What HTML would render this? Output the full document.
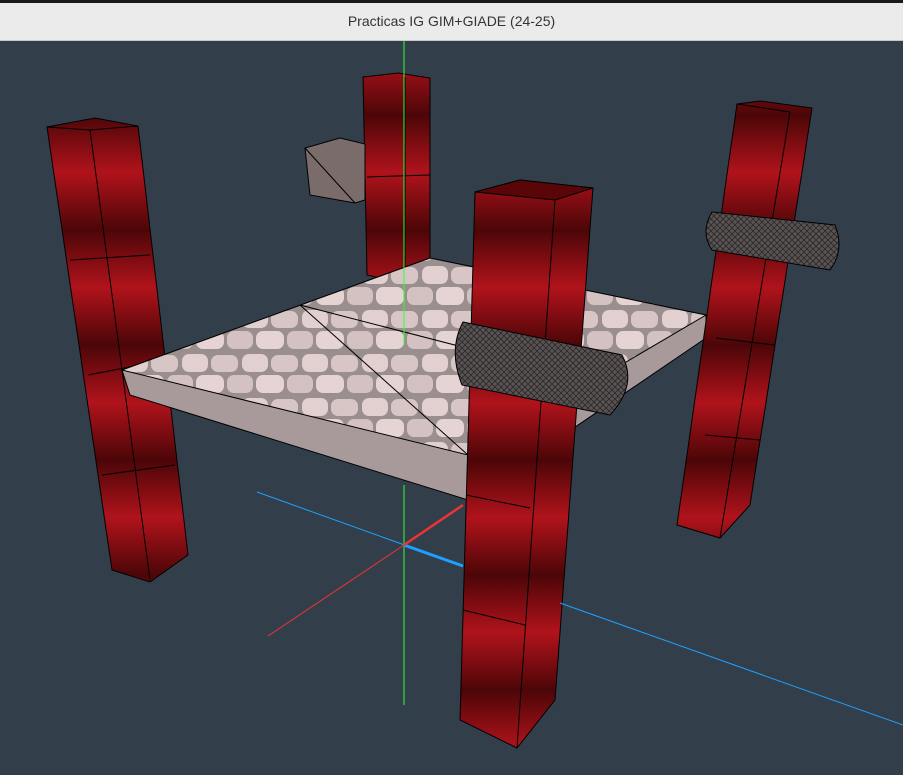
<!DOCTYPE html>
<html><head><meta charset="utf-8"><style>
body{margin:0;width:903px;height:775px;overflow:hidden;background:#323f4b;font-family:"Liberation Sans",sans-serif}
#top{position:absolute;left:0;top:0;width:903px;height:3px;background:#1a1a1a}
#bar{position:absolute;left:0;top:3px;width:903px;height:37px;background:#ebebeb;border-bottom:1px solid #c8c8c8;text-align:center;line-height:36px;font-size:14px;color:#333}
svg{position:absolute;left:0;top:41px}
</style></head><body>
<div id="top"></div><div id="bar">Practicas IG GIM+GIADE (24-25)</div>
<svg width="903" height="734" viewBox="0 41 903 734">
<defs>
<linearGradient id="r" x1="0" y1="0" x2="0" y2="1" spreadMethod="repeat">
<stop offset="0" stop-color="#4c0608"/><stop offset="0.5" stop-color="#b0131b"/><stop offset="1" stop-color="#4c0608"/>
</linearGradient>
<pattern id="rp" width="10" height="115" patternUnits="userSpaceOnUse"><rect width="10" height="115" fill="url(#r)"/></pattern>
<pattern id="st" width="60" height="44" patternUnits="userSpaceOnUse">
<rect width="60" height="44" fill="#9a8e8e"/>
<rect x="2" y="2" width="26" height="18" rx="7" fill="#e2d0d0"/>
<rect x="31" y="3" width="27" height="17" rx="7" fill="#d8c6c6"/>
<rect x="16" y="23" width="28" height="18" rx="7" fill="#e6d4d4"/>
<rect x="-11" y="23" width="24" height="18" rx="7" fill="#d4c2c2"/>
<rect x="47" y="23" width="24" height="18" rx="7" fill="#d4c2c2"/>
</pattern>
<pattern id="mesh" width="6" height="6" patternUnits="userSpaceOnUse"><rect width="6" height="6" fill="#5a5252"/><path d="M0 0L6 6M6 0L0 6" stroke="#222" stroke-width="0.7"/></pattern>
</defs>
<g stroke="#000" stroke-width="1">
<polygon points="363,77 398,73 430,78 430,265 398,282 367,275" fill="url(#rp)"/>
<line x1="405" y1="77" x2="405" y2="280"/>
<line x1="367" y1="177" x2="430" y2="175"/>
<polygon points="305,148 340,138 365,144 365,200 355,203 310,195" fill="#7a6c6a"/>
<line x1="305" y1="148" x2="355" y2="203"/>
<polygon points="47,127 95,118 138,126 188,555 150,582 112,570" fill="url(#rp)"/>
<line x1="90" y1="130" x2="150" y2="580"/><line x1="47" y1="127" x2="90" y2="130"/><line x1="90" y1="130" x2="138" y2="126"/>
<line x1="70" y1="260" x2="150" y2="255"/><line x1="88" y1="375" x2="165" y2="360"/><line x1="102" y1="475" x2="175" y2="465"/>
<polygon points="122,370 430,258 706,315 706,338 468,500 130,395" fill="#a89a9a"/>
<polygon points="122,370 430,258 706,315 468,455" fill="url(#st)"/>
<line x1="300" y1="305" x2="590" y2="380"/>
<line x1="300" y1="305" x2="468" y2="455"/>
<polygon points="737,104 760,101 812,108 750,505 720,538 677,525" fill="url(#rp)"/>
<line x1="737" y1="104" x2="790" y2="112"/><line x1="790" y1="112" x2="720" y2="538"/>
<line x1="716" y1="338" x2="775" y2="345"/><line x1="705" y1="435" x2="760" y2="440"/>
<path d="M712 212 L835 225 Q845 250 830 270 L712 250 Q700 232 712 212Z" fill="url(#mesh)"/>
<polygon points="475,192 520,180 593,188 555,700 517,748 460,720" fill="url(#rp)"/>
<polygon points="475,192 520,180 593,188 555,200" fill="#5a0608"/>
<line x1="555" y1="200" x2="517" y2="748"/>
<line x1="466" y1="495" x2="530" y2="508"/><line x1="463" y1="610" x2="525" y2="625"/>
<path d="M463 322 L622 355 Q638 385 610 415 L462 385 Q448 350 463 322Z" fill="url(#mesh)"/>
</g>
<line x1="404" y1="41" x2="404" y2="345" stroke="#3f3" stroke-width="1"/>
<line x1="404" y1="485" x2="404" y2="705" stroke="#3f3" stroke-width="1"/>
<line x1="257" y1="492" x2="463" y2="566" stroke="#1ea0ff" stroke-width="1"/>
<line x1="404" y1="545" x2="463" y2="566" stroke="#1ea0ff" stroke-width="3"/>
<line x1="560" y1="603" x2="903" y2="725" stroke="#1ea0ff" stroke-width="1"/>
<line x1="268" y1="636" x2="404" y2="545" stroke="#e33" stroke-width="1"/>
<line x1="404" y1="545" x2="463" y2="505" stroke="#e33" stroke-width="2.5"/>
</svg>
</body></html>
